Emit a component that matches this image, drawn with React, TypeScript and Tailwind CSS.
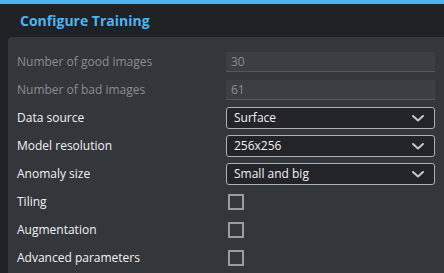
import React from "react";

const Chevron = () => (
  <svg width="12" height="7" viewBox="0 0 12 7" fill="none" className="shrink-0">
    <path d="M1 1L6 5.5L11 1" stroke="#c8c8c8" strokeWidth="2" strokeLinecap="round" strokeLinejoin="round" />
  </svg>
);

const Label = ({ children, disabled }: { children: React.ReactNode; disabled?: boolean }) => (
  <div className={`h-[28px] flex items-center text-[12px] ${disabled ? "text-[#8b8d91]" : "text-[#f2f2f2]"}`}>{children}</div>
);

const Disabled = ({ value }: { value: string }) => (
  <div className="h-[28px] flex items-center">
    <div className="w-full h-[20px] bg-[#3c3e43] border-b border-[#55575b] flex items-center pl-[5px] text-[12px] text-[#8b8d91]">
      {value}
    </div>
  </div>
);

const Select = ({ value }: { value: string }) => (
  <div className="h-[28px] flex items-center">
    <div className="w-full h-[22px] bg-[#222429] border border-[#aeb0b2] rounded-[3px] flex items-center justify-between pl-[7px] pr-[10px] text-[12px] text-[#f2f2f2]">
      <span>{value}</span>
      <Chevron />
    </div>
  </div>
);

const Check = () => (
  <div className="h-[28px] flex items-center pl-[2px]">
    <div className="w-[16px] h-[16px] border-2 border-[#9c9c9c]" />
  </div>
);

export default function App() {
  return (
    <div
      className="w-[444px] h-[273px] bg-[#1f2125] overflow-hidden flex flex-col"
      style={{ fontFamily: '"Open Sans", sans-serif' }}
    >
      <div className="h-[4px] bg-[#4cb4f2] shrink-0" />
      <div className="h-[33px] shrink-0 flex items-center pl-[20px] text-[14px] font-bold text-[#4cb4f2]">
        Configure Training
      </div>
      <div className="flex-1 ml-[8px] bg-[#33363b] rounded-tl-[4px] pt-[11px] pl-[9px] pr-[9px]">
        <div className="grid grid-cols-2">
          <Label disabled>Number of good images</Label>
          <Disabled value="30" />
          <Label disabled>Number of bad images</Label>
          <Disabled value="61" />
          <Label>Data source</Label>
          <Select value="Surface" />
          <Label>Model resolution</Label>
          <Select value="256x256" />
          <Label>Anomaly size</Label>
          <Select value="Small and big" />
          <Label>Tiling</Label>
          <Check />
          <Label>Augmentation</Label>
          <Check />
          <Label>Advanced parameters</Label>
          <Check />
        </div>
      </div>
    </div>
  );
}
